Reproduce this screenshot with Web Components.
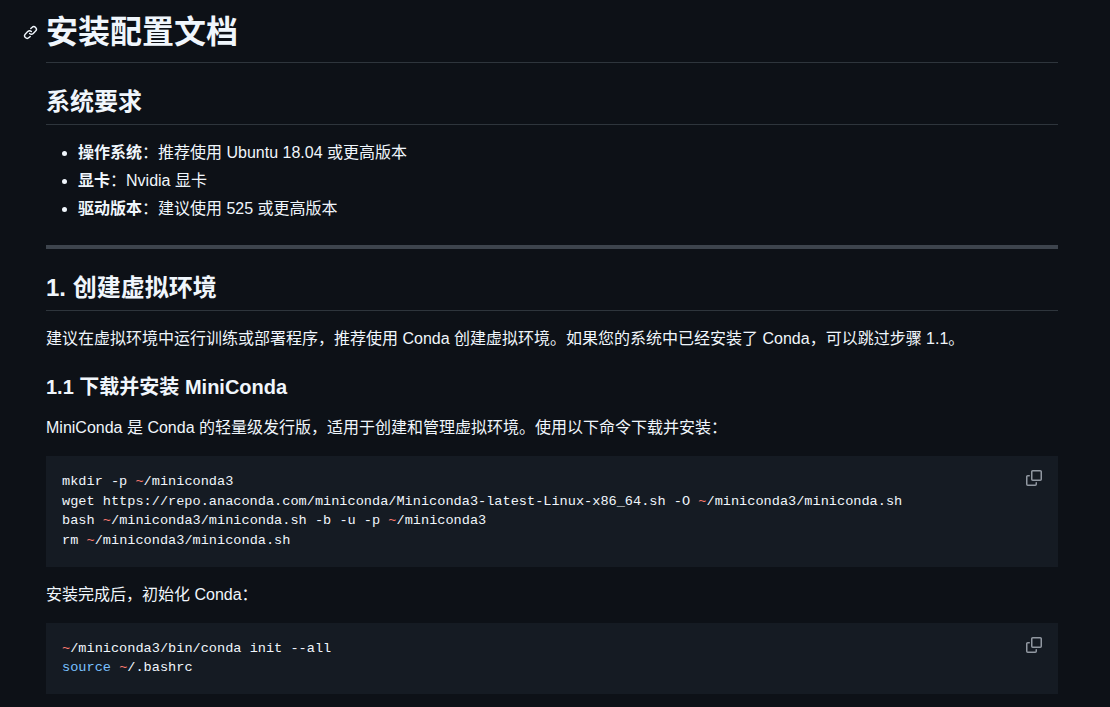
<!DOCTYPE html>
<html lang="zh">
<head>
<meta charset="utf-8">
<title>安装配置文档</title>
<style>
  html, body { margin: 0; height: 100%; overflow: hidden; background: #0d1117; }
</style>
</head>
<body>
<md-article>
  <md-heading level="1" anchor>安装配置文档</md-heading>
  <md-heading level="2">系统要求</md-heading>
  <md-list>
    <md-item><md-strong>操作系统</md-strong>：推荐使用 Ubuntu 18.04 或更高版本</md-item>
    <md-item><md-strong>显卡</md-strong>：Nvidia 显卡</md-item>
    <md-item><md-strong>驱动版本</md-strong>：建议使用 525 或更高版本</md-item>
  </md-list>
  <md-rule></md-rule>
  <md-heading level="2">1. 创建虚拟环境</md-heading>
  <md-para>建议在虚拟环境中运行训练或部署程序，推荐使用 Conda 创建虚拟环境。如果您的系统中已经安装了 Conda，可以跳过步骤 1.1。</md-para>
  <md-heading level="3">1.1 下载并安装 MiniConda</md-heading>
  <md-para>MiniConda 是 Conda 的轻量级发行版，适用于创建和管理虚拟环境。使用以下命令下载并安装：</md-para>
  <md-code>
    <code-line>mkdir -p <code-tok kind="op">~</code-tok>/miniconda3</code-line>
    <code-line>wget https://repo.anaconda.com/miniconda/Miniconda3-latest-Linux-x86_64.sh -O <code-tok kind="op">~</code-tok>/miniconda3/miniconda.sh</code-line>
    <code-line>bash <code-tok kind="op">~</code-tok>/miniconda3/miniconda.sh -b -u -p <code-tok kind="op">~</code-tok>/miniconda3</code-line>
    <code-line>rm <code-tok kind="op">~</code-tok>/miniconda3/miniconda.sh</code-line>
  </md-code>
  <md-para>安装完成后，初始化 Conda：</md-para>
  <md-code>
    <code-line><code-tok kind="op">~</code-tok>/miniconda3/bin/conda init --all</code-line>
    <code-line><code-tok kind="fn">source</code-tok> <code-tok kind="op">~</code-tok>/.bashrc</code-line>
  </md-code>
</md-article>

<script>
// 공통: 클래스 하나로 shadow root 만들기
function define(name, css, html) {
  customElements.define(name, class extends HTMLElement {
    constructor() {
      super();
      this.attachShadow({ mode: 'open' });
      this.shadowRoot.innerHTML = `<style>${css}</style>${html}`;
    }
  });
}

define('md-article', `
  :host {
    display: flex;
    flex-direction: column;
    padding: 12px 52px 0 46px;
    color: #f0f6fc;
    font: 16px/1.5 "Liberation Sans", "Noto Sans CJK SC", sans-serif;
  }
`, `<slot></slot>`);

const linkPath = 'm7.775 3.275 1.25-1.25a3.5 3.5 0 1 1 4.95 4.95l-2.5 2.5a3.5 3.5 0 0 1-4.95 0 .751.751 0 0 1 .018-1.042.751.751 0 0 1 1.042-.018 1.998 1.998 0 0 0 2.83 0l2.5-2.5a2.002 2.002 0 0 0-2.83-2.83l-1.25 1.25a.751.751 0 0 1-1.042-.018.751.751 0 0 1-.018-1.042Zm-4.69 9.64a1.998 1.998 0 0 0 2.83 0l1.25-1.25a.751.751 0 0 1 1.042.018.751.751 0 0 1 .018 1.042l-1.25 1.25a3.5 3.5 0 1 1-4.95-4.95l2.5-2.5a3.5 3.5 0 0 1 4.95 0 .751.751 0 0 1-.018 1.042.751.751 0 0 1-1.042.018 1.998 1.998 0 0 0-2.83 0l-2.5 2.5a1.998 1.998 0 0 0 0 2.83Z';

define('md-heading', `
  :host { display: block; position: relative; font-weight: 600; line-height: 1.25; }
  :host([level="1"]) { font-size: 32px; padding-bottom: 9.6px; border-bottom: 1px solid #3d444db3; }
  :host([level="2"]) { font-size: 24px; padding-bottom: 7.2px; border-bottom: 1px solid #3d444db3; margin-top: 24px; margin-bottom: 16px; }
  :host([level="3"]) { font-size: 20px; margin-top: 8px; margin-bottom: 16px; }
  svg { display: none; position: absolute; left: -23px; top: 13px; fill: #f0f6fc; }
  :host([anchor]) svg { display: block; }
`, `<svg width="15" height="15" viewBox="0 0 16 16"><path d="${linkPath}"/></svg><slot></slot>`);

define('md-list', `
  :host { display: block; margin: 0 0 16px; padding-left: 32px; }
`, `<slot></slot>`);

define('md-item', `
  :host { display: list-item; list-style: disc; }
  :host(:not(:first-child)) { margin-top: 4px; }
`, `<slot></slot>`);

define('md-strong', `:host { font-weight: 600; }`, `<slot></slot>`);

define('md-rule', `
  :host { display: block; height: 4px; background: #3d444d; margin: 8px 0 0; }
`, ``);

define('md-para', `:host { display: block; margin-bottom: 16px; }`, `<slot></slot>`);

const copyIcon = `<svg width="16" height="16" viewBox="0 0 16 16"><path d="M0 6.75C0 5.784.784 5 1.75 5h1.5a.75.75 0 0 1 0 1.5h-1.5a.25.25 0 0 0-.25.25v7.5c0 .138.112.25.25.25h7.5a.25.25 0 0 0 .25-.25v-1.5a.75.75 0 0 1 1.5 0v1.5A1.75 1.75 0 0 1 9.25 16h-7.5A1.75 1.75 0 0 1 0 14.25Z"/><path d="M5 1.75C5 .784 5.784 0 6.75 0h7.5C15.216 0 16 .784 16 1.75v7.5A1.75 1.75 0 0 1 14.25 11h-7.5A1.75 1.75 0 0 1 5 9.25Zm1.75-.25a.25.25 0 0 0-.25.25v7.5c0 .138.112.25.25.25h7.5a.25.25 0 0 0 .25-.25v-7.5a.25.25 0 0 0-.25-.25Z"/></svg>`;

define('md-code', `
  :host {
    display: block;
    position: relative;
    flex: none;
    margin-bottom: 16px;
    padding: 16px;
    background: #151b23;
    font: 13.6px/1.45 "Liberation Mono", monospace;
  }
  svg { position: absolute; top: 14px; right: 16px; fill: #9198a1; }
`, `<slot></slot>${copyIcon}`);

define('code-line', `:host { display: block; white-space: pre; }`, `<slot></slot>`);

define('code-tok', `
  :host([kind="op"]) { color: #ff7b72; }
  :host([kind="fn"]) { color: #79c0ff; }
`, `<slot></slot>`);
</script>
</body>
</html>
